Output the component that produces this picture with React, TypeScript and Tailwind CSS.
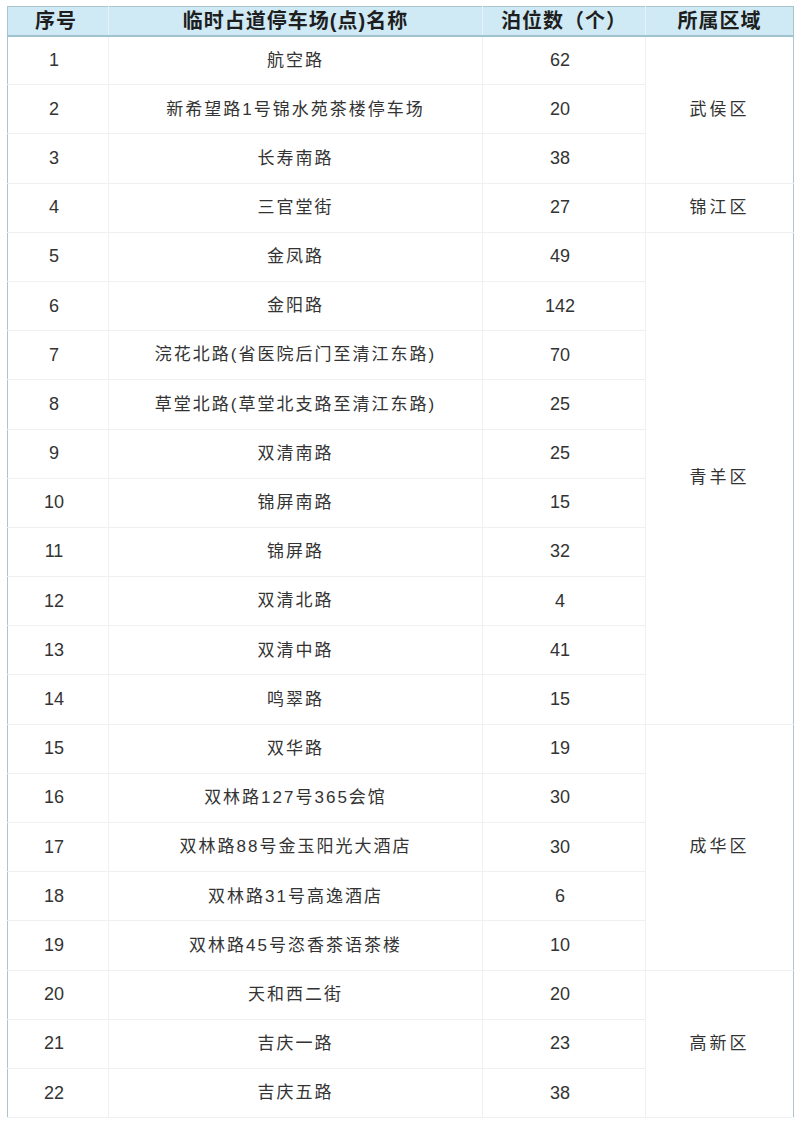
const rows: { id: number; name: string; count: number }[] = [
  { id: 1, name: '航空路', count: 62 },
  { id: 2, name: '新希望路1号锦水苑茶楼停车场', count: 20 },
  { id: 3, name: '长寿南路', count: 38 },
  { id: 4, name: '三官堂街', count: 27 },
  { id: 5, name: '金凤路', count: 49 },
  { id: 6, name: '金阳路', count: 142 },
  { id: 7, name: '浣花北路(省医院后门至清江东路)', count: 70 },
  { id: 8, name: '草堂北路(草堂北支路至清江东路)', count: 25 },
  { id: 9, name: '双清南路', count: 25 },
  { id: 10, name: '锦屏南路', count: 15 },
  { id: 11, name: '锦屏路', count: 32 },
  { id: 12, name: '双清北路', count: 4 },
  { id: 13, name: '双清中路', count: 41 },
  { id: 14, name: '鸣翠路', count: 15 },
  { id: 15, name: '双华路', count: 19 },
  { id: 16, name: '双林路127号365会馆', count: 30 },
  { id: 17, name: '双林路88号金玉阳光大酒店', count: 30 },
  { id: 18, name: '双林路31号高逸酒店', count: 6 },
  { id: 19, name: '双林路45号恣香茶语茶楼', count: 10 },
  { id: 20, name: '天和西二街', count: 20 },
  { id: 21, name: '吉庆一路', count: 23 },
  { id: 22, name: '吉庆五路', count: 38 },
]

// region cell starts at the row id and spans n rows
const regions: Record<number, { name: string; span: number }> = {
  1: { name: '武侯区', span: 3 },
  4: { name: '锦江区', span: 1 },
  5: { name: '青羊区', span: 10 },
  15: { name: '成华区', span: 5 },
  20: { name: '高新区', span: 3 },
}

const font = { fontFamily: '"Liberation Sans", "Noto Sans CJK SC", sans-serif' }

export default function App() {
  return (
    <div className="min-h-[1125px] w-[800px] bg-white pl-[7px] pt-[6px]" style={font}>
      <table className="w-[787px] table-fixed border-collapse border border-[#a9c6cf] text-[#333]">
        <colgroup>
          <col className="w-[101px]" />
          <col className="w-[374px]" />
          <col className="w-[163px]" />
          <col />
        </colgroup>
        <thead>
          <tr className="h-[29px] bg-[#cfeaf5] text-[20px] font-bold tracking-[1px] text-[#1e1e1e]">
            <th className="border-b-2 border-r border-b-[#9fc3d0] border-r-[#e4f2f8] p-0 pr-[4px] leading-none">
              序号
            </th>
            <th className="border-b-2 border-r border-b-[#9fc3d0] border-r-[#e4f2f8] p-0 leading-none">
              临时占道停车场(点)名称
            </th>
            <th className="border-b-2 border-r border-b-[#9fc3d0] border-r-[#e4f2f8] p-0 leading-none">
              泊位数（个）
            </th>
            <th className="border-b-2 border-b-[#9fc3d0] p-0 leading-none">所属区域</th>
          </tr>
        </thead>
        <tbody>
          {rows.map((row) => {
            const region = regions[row.id]
            return (
              <tr key={row.id} className="h-[49.2px]">
                <td className="border-b border-r border-[#eef1f1] p-0 pr-[8px] text-center text-[18px]">{row.id}</td>
                <td className="border-b border-r border-[#eef1f1] p-0 text-center text-[17px] tracking-[2px]">
                  {row.name}
                </td>
                <td className="border-b border-r border-[#eef1f1] p-0 pr-[8px] text-center text-[18px]">
                  {row.count}
                </td>
                {region ? (
                  <td
                    rowSpan={region.span}
                    className="border-b border-[#eef1f1] p-0 text-center text-[17px] tracking-[3px]"
                  >
                    {region.name}
                  </td>
                ) : null}
              </tr>
            )
          })}
        </tbody>
      </table>
    </div>
  )
}
